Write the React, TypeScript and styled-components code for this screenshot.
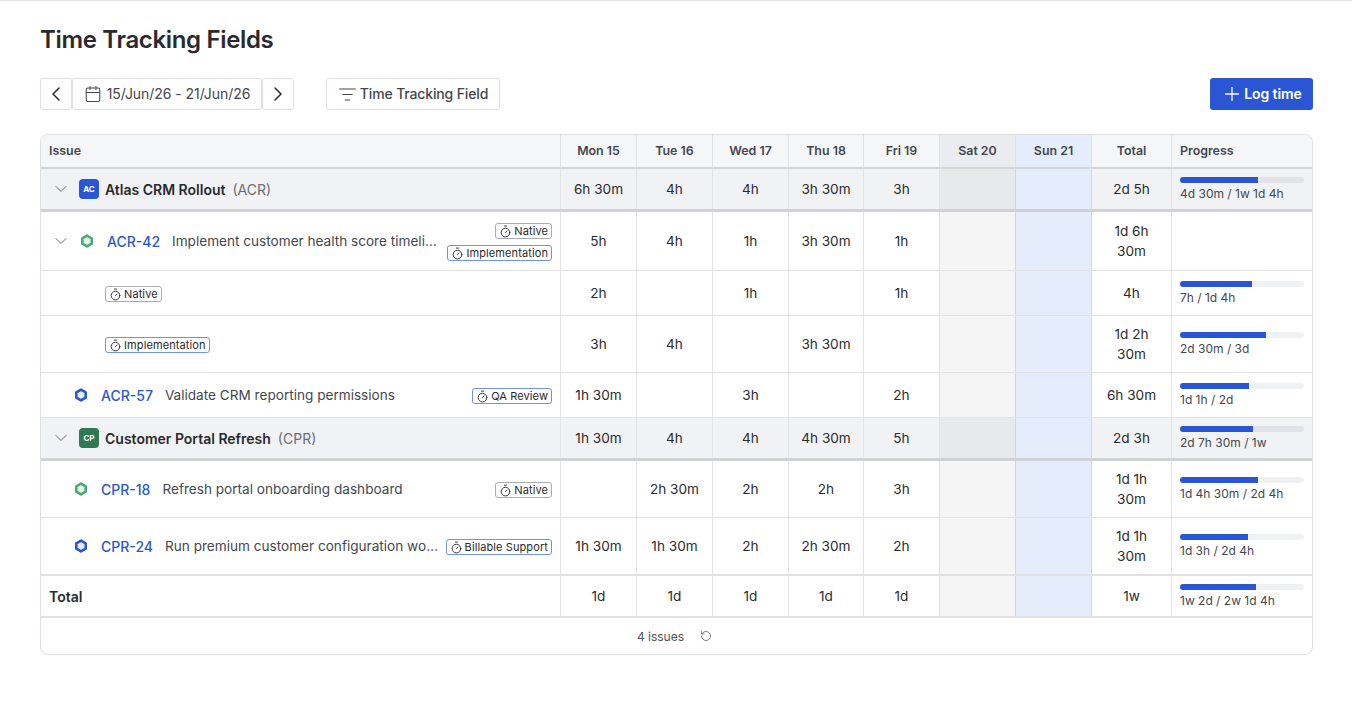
import React from "react";
import styled, { createGlobalStyle } from "styled-components";
import {
  Calendar,
  ChevronDown,
  ChevronLeft,
  ChevronRight,
  ListFilter,
  Plus,
  RotateCcw,
  Timer,
} from "lucide-react";

const GlobalStyle = createGlobalStyle`
  * { box-sizing: border-box; }
  html, body { margin: 0; padding: 0; background: #fff; }
  body {
    font-family: Inter, "Liberation Sans", sans-serif;
    color: #292a2e;
    -webkit-font-smoothing: antialiased;
  }
`;

const COLUMNS = "520px 76px 76px 76px 75px 76px 76px 76px 80px 1fr";
const days = ["Mon 15", "Tue 16", "Wed 17", "Thu 18", "Fri 19", "Sat 20", "Sun 21"];

type Tag = { label: string; accent?: boolean };
type Progress = { pct: number; text: string };

const Hexagon = ({ color, fill }: { color: string; fill: string }) => (
  <svg width="14" height="14" viewBox="0 0 14 14">
    <path
      d="M7 1.6 11.7 4.3V9.7L7 12.4 2.3 9.7V4.3Z"
      fill={fill}
      stroke={color}
      strokeWidth="2.6"
      strokeLinejoin="round"
    />
  </svg>
);

const TimeTag = ({ label, accent }: Tag) => (
  <TagBox $accent={accent}>
    <Timer size={13} strokeWidth={1.7} />
    {label}
  </TagBox>
);

const DayCells = ({ values, $tone }: { values: string[]; $tone?: "group" }) => (
  <>
    {values.map((v, i) => (
      <Cell key={i} $day={i === 5 ? "sat" : i === 6 ? "sun" : undefined} $tone={$tone}>
        {v}
      </Cell>
    ))}
  </>
);

const ProgressCell = ({ data, $tone }: { data?: Progress; $tone?: "group" }) => (
  <ProgressBox $tone={$tone}>
    {data && (
      <>
        <Track $tone={$tone}>
          <Fill style={{ width: `${data.pct}%` }} />
        </Track>
        <ProgressText>{data.text}</ProgressText>
      </>
    )}
  </ProgressBox>
);

const GroupRow = (p: {
  initials: string;
  color: string;
  name: string;
  code: string;
  values: string[];
  total: string;
  progress: Progress;
}) => (
  <Row $height={43} $line="group">
    <IssueCell $tone="group" $indent={10}>
      <Chevron>
        <ChevronDown size={20} strokeWidth={1.2} />
      </Chevron>
      <Avatar $color={p.color}>{p.initials}</Avatar>
      <GroupName>{p.name}</GroupName>
      <GroupCode>({p.code})</GroupCode>
    </IssueCell>
    <DayCells values={p.values} $tone="group" />
    <Cell $tone="group">{p.total}</Cell>
    <ProgressCell data={p.progress} $tone="group" />
  </Row>
);

const IssueRow = (p: {
  id: string;
  title: string;
  color: string;
  fill: string;
  tags: Tag[];
  values: string[];
  total: string;
  progress?: Progress;
  height: number;
  expandable?: boolean;
  line?: "thick";
}) => (
  <Row $height={p.height} $line={p.line}>
    <IssueCell $indent={p.expandable ? 10 : 33}>
      {p.expandable && (
        <Chevron>
          <ChevronDown size={20} strokeWidth={1.2} />
        </Chevron>
      )}
      <HexSlot $wide={p.expandable}>
        <Hexagon color={p.color} fill={p.fill} />
      </HexSlot>
      <IssueKey>{p.id}</IssueKey>
      <IssueTitle>{p.title}</IssueTitle>
      <TagStack>
        {p.tags.map((t) => (
          <TimeTag key={t.label} {...t} />
        ))}
      </TagStack>
    </IssueCell>
    <DayCells values={p.values} />
    <Cell>{p.total}</Cell>
    <ProgressCell data={p.progress} />
  </Row>
);

const FieldRow = (p: {
  tag: Tag;
  values: string[];
  total: string;
  progress: Progress;
  height: number;
}) => (
  <Row $height={p.height}>
    <IssueCell $indent={64}>
      <TimeTag {...p.tag} />
    </IssueCell>
    <DayCells values={p.values} />
    <Cell>{p.total}</Cell>
    <ProgressCell data={p.progress} />
  </Row>
);

export default function App() {
  return (
    <Page>
      <GlobalStyle />
      <Title>Time Tracking Fields</Title>
      <Toolbar>
        <IconButton>
          <ChevronLeft size={24} strokeWidth={1.5} />
        </IconButton>
        <DateButton>
          <Calendar size={18} strokeWidth={1.4} />
          15/Jun/26 - 21/Jun/26
        </DateButton>
        <IconButton>
          <ChevronRight size={24} strokeWidth={1.5} />
        </IconButton>
        <FilterButton>
          <ListFilter size={19} strokeWidth={1.3} />
          Time Tracking Field
        </FilterButton>
        <LogButton>
          <Plus size={22} strokeWidth={1.4} />
          Log time
        </LogButton>
      </Toolbar>

      <Card>
        <Row $height={34} $line="head">
          <HeadCell $left>Issue</HeadCell>
          {days.map((d, i) => (
            <HeadCell key={d} $day={i === 5 ? "sat" : i === 6 ? "sun" : undefined}>
              {d}
            </HeadCell>
          ))}
          <HeadCell>Total</HeadCell>
          <HeadCell $left $last>
            Progress
          </HeadCell>
        </Row>

        <GroupRow
          initials="AC"
          color="#2a56d4"
          name="Atlas CRM Rollout"
          code="ACR"
          values={["6h 30m", "4h", "4h", "3h 30m", "3h", "", ""]}
          total="2d 5h"
          progress={{ pct: 63, text: "4d 30m / 1w 1d 4h" }}
        />
        <IssueRow
          height={59}
          expandable
          id="ACR-42"
          title="Implement customer health score timeline view"
          color="#4bab73"
          fill="#e3f4e9"
          tags={[{ label: "Native" }, { label: "Implementation", accent: true }]}
          values={["5h", "4h", "1h", "3h 30m", "1h", "", ""]}
          total="1d 6h 30m"
        />
        <FieldRow
          height={45}
          tag={{ label: "Native" }}
          values={["2h", "", "1h", "", "1h", "", ""]}
          total="4h"
          progress={{ pct: 58, text: "7h / 1d 4h" }}
        />
        <FieldRow
          height={57}
          tag={{ label: "Implementation", accent: true }}
          values={["3h", "4h", "", "3h 30m", "", "", ""]}
          total="1d 2h 30m"
          progress={{ pct: 69, text: "2d 30m / 3d" }}
        />
        <IssueRow
          height={45}
          id="ACR-57"
          title="Validate CRM reporting permissions"
          color="#2a56d4"
          fill="#e3ebfb"
          tags={[{ label: "QA Review", accent: true }]}
          values={["1h 30m", "", "3h", "", "2h", "", ""]}
          total="6h 30m"
          progress={{ pct: 56, text: "1d 1h / 2d" }}
        />
        <GroupRow
          initials="CP"
          color="#2f7a52"
          name="Customer Portal Refresh"
          code="CPR"
          values={["1h 30m", "4h", "4h", "4h 30m", "5h", "", ""]}
          total="2d 3h"
          progress={{ pct: 59, text: "2d 7h 30m / 1w" }}
        />
        <IssueRow
          height={57}
          id="CPR-18"
          title="Refresh portal onboarding dashboard"
          color="#4bab73"
          fill="#e3f4e9"
          tags={[{ label: "Native" }]}
          values={["", "2h 30m", "2h", "2h", "3h", "", ""]}
          total="1d 1h 30m"
          progress={{ pct: 63, text: "1d 4h 30m / 2d 4h" }}
        />
        <IssueRow
          height={58}
          line="thick"
          id="CPR-24"
          title="Run premium customer configuration workflow"
          color="#2a56d4"
          fill="#e3ebfb"
          tags={[{ label: "Billable Support", accent: true }]}
          values={["1h 30m", "1h 30m", "2h", "2h 30m", "2h", "", ""]}
          total="1d 1h 30m"
          progress={{ pct: 55, text: "1d 3h / 2d 4h" }}
        />
        <Row $height={42} $line="thick">
          <IssueCell $indent={8}>
            <TotalLabel>Total</TotalLabel>
          </IssueCell>
          <DayCells values={["1d", "1d", "1d", "1d", "1d", "", ""]} />
          <Cell>1w</Cell>
          <ProgressCell data={{ pct: 61, text: "1w 2d / 2w 1d 4h" }} />
        </Row>
        <Footer>
          4 issues
          <RotateCcw size={12} strokeWidth={1.5} />
        </Footer>
      </Card>
    </Page>
  );
}

const Page = styled.div`
  border-top: 1px solid #e2e3e6;
  padding: 0 39px 0 40px;
  height: 704px;
  overflow: hidden;
`;

const Title = styled.h1`
  margin: 24px 0 0;
  font-size: 24px;
  line-height: 30px;
  font-weight: 600;
  letter-spacing: -0.34px;
  color: #292a2e;
`;

const Toolbar = styled.div`
  display: flex;
  align-items: center;
  margin-top: 23px;
  height: 32px;
`;

const ToolButton = styled.button`
  display: inline-flex;
  align-items: center;
  justify-content: center;
  height: 32px;
  background: #fff;
  border: 1px solid #dcdfe4;
  border-radius: 3px;
  font-family: inherit;
  font-size: 14px;
  line-height: 18px;
  font-weight: 500;
  color: #44474e;
  padding: 0;
`;

const IconButton = styled(ToolButton)`
  width: 32px;
  color: #292a2e;
`;

const DateButton = styled(ToolButton)`
  width: 190px;
  gap: 5px;
  font-weight: 400;
  letter-spacing: -0.05px;
`;

const FilterButton = styled(ToolButton)`
  width: 174px;
  gap: 3px;
  margin-left: 32px;
  letter-spacing: -0.15px;
`;

const LogButton = styled(ToolButton)`
  margin-left: auto;
  width: 103px;
  gap: 1px;
  border: none;
  background: #2a56d4;
  color: #fff;
  font-weight: 600;
  letter-spacing: -0.1px;
`;

const Card = styled.div`
  margin-top: 24px;
  border: 1px solid #dcdfe4;
  border-radius: 8px;
  overflow: hidden;
  background: #fff;
`;

const lineStyle = {
  head: "2px solid #d3d5da",
  group: "3px solid #d0d2d8",
  thick: "2px solid #dfe1e5",
};

const Row = styled.div<{ $height: number; $line?: "head" | "group" | "thick" }>`
  display: grid;
  grid-template-columns: ${COLUMNS};
  height: ${(p) => p.$height}px;
  border-bottom: ${(p) => (p.$line ? lineStyle[p.$line] : "1px solid #e2e3e6")};
`;

const dayBackground = (day?: "sat" | "sun", tone?: "group") => {
  if (day === "sun") return "#e5edfc";
  if (day === "sat") return tone === "group" ? "#e8e9eb" : "#f5f5f5";
  return tone === "group" ? "#f1f2f4" : "#fff";
};

const Cell = styled.div<{ $day?: "sat" | "sun"; $tone?: "group" }>`
  display: flex;
  align-items: center;
  justify-content: center;
  text-align: center;
  padding: 0 12px;
  border-right: 1px solid ${(p) => (p.$day ? "#d3d6dd" : "#e2e3e6")};
  background: ${(p) => dayBackground(p.$day, p.$tone)};
  font-size: 13.6px;
  line-height: 20px;
  color: #292a2e;
`;

const HeadCell = styled.div<{ $day?: "sat" | "sun"; $left?: boolean; $last?: boolean }>`
  display: flex;
  align-items: center;
  justify-content: ${(p) => (p.$left ? "flex-start" : "center")};
  padding: 0 8px 2px;
  border-right: ${(p) => (p.$last ? "none" : "1px solid #dfe1e5")};
  background: ${(p) =>
    p.$day === "sun" ? "#e5edfc" : p.$day === "sat" ? "#ebecef" : "#f5f6f8"};
  font-size: 12.4px;
  font-weight: 600;
  color: #44474e;
`;

const IssueCell = styled.div<{ $indent: number; $tone?: "group" }>`
  display: flex;
  align-items: center;
  min-width: 0;
  padding: 0 8px 0 ${(p) => p.$indent}px;
  border-right: 1px solid #e2e3e6;
  background: ${(p) => (p.$tone === "group" ? "#f1f2f4" : "#fff")};
`;

const Chevron = styled.span`
  display: inline-flex;
  width: 20px;
  margin-right: 8px;
  color: #6b6e76;
`;

const Avatar = styled.span<{ $color: string }>`
  display: inline-flex;
  align-items: center;
  justify-content: center;
  width: 20px;
  height: 20px;
  border-radius: 4px;
  background: ${(p) => p.$color};
  color: #fff;
  font-size: 8px;
  font-weight: 700;
`;

const GroupName = styled.span`
  margin-left: 6px;
  font-size: 14px;
  font-weight: 600;
  color: #292a2e;
`;

const GroupCode = styled.span`
  margin-left: 7px;
  font-size: 14px;
  color: #6b6e76;
`;

const HexSlot = styled.span<{ $wide?: boolean }>`
  display: inline-flex;
  width: 14px;
  margin-left: ${(p) => (p.$wide ? "1px" : "0")};
  margin-right: 13px;
`;

const IssueKey = styled.span`
  flex: none;
  font-size: 14px;
  font-weight: 500;
  color: #2a56d4;
`;

const IssueTitle = styled.span`
  flex: 1;
  min-width: 0;
  margin: 0 6px 0 12px;
  font-size: 13.6px;
  color: #44474e;
  white-space: nowrap;
  overflow: hidden;
  text-overflow: ellipsis;
`;

const TagStack = styled.div`
  display: flex;
  flex: none;
  flex-direction: column;
  align-items: flex-end;
  gap: 6px;
`;

const TagBox = styled.span<{ $accent?: boolean }>`
  display: inline-flex;
  align-items: center;
  gap: 2px;
  height: 16px;
  margin-top: 2px;
  padding: 0 3px;
  border: 1px solid ${(p) => (p.$accent ? "#6f93e8" : "#a9acb3")};
  border-radius: 3px;
  background: #fff;
  font-size: 11px;
  font-weight: 400;
  letter-spacing: 0.1px;
  color: #292a2e;
  white-space: nowrap;

  & + & {
    margin-top: 0;
  }
`;

const ProgressBox = styled.div<{ $tone?: "group" }>`
  display: flex;
  flex-direction: column;
  justify-content: center;
  padding: 0 8px;
  background: ${(p) => (p.$tone === "group" ? "#f1f2f4" : "#fff")};
`;

const Track = styled.div<{ $tone?: "group" }>`
  height: 6px;
  border-radius: 3px;
  overflow: hidden;
  background: ${(p) => (p.$tone === "group" ? "#e2e3e7" : "#f0f1f3")};
`;

const Fill = styled.div`
  height: 100%;
  background: #2a56d4;
`;

const ProgressText = styled.div`
  margin-top: 4px;
  font-size: 12px;
  line-height: 14px;
  color: #44474e;
  white-space: nowrap;
`;

const TotalLabel = styled.span`
  font-size: 14px;
  font-weight: 600;
  color: #292a2e;
`;

const Footer = styled.div`
  display: flex;
  align-items: center;
  justify-content: center;
  gap: 16px;
  height: 36px;
  padding-right: 4px;
  font-size: 12px;
  color: #50535a;
`;
